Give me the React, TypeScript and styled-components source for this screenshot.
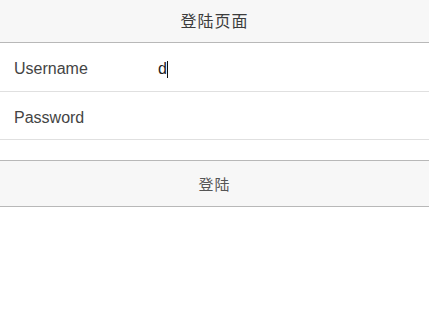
import React from "react";
import styled, { createGlobalStyle } from "styled-components";

const Global = createGlobalStyle`
  html, body { margin: 0; padding: 0; background: #fff; }
  body { font-family: "Liberation Sans", Arial, "Noto Sans CJK SC", sans-serif; color: #333; }
`;

const Page = styled.div`
  width: 429px;
  display: flex;
  flex-direction: column;
`;

const Header = styled.header`
  height: 43px;
  box-sizing: border-box;
  padding-bottom: 2px;
  background: #f7f7f7;
  border-bottom: 1px solid #b8b8b8;
  display: flex;
  align-items: center;
  justify-content: center;
  font-size: 16px;
  color: #3c3c3c;
  letter-spacing: 1px;
  font-family: "Noto Sans CJK SC", sans-serif;
`;

const Form = styled.div`
  display: flex;
  flex-direction: column;
`;

const Row = styled.label<{ $h: number }>`
  height: ${(p) => p.$h}px;
  box-sizing: border-box;
  padding-top: 4px;
  border-bottom: 1px solid #e0e0e0;
  display: flex;
  align-items: center;
  padding-left: 14px;
  font-size: 16px;
`;

const Label = styled.span`
  width: 144px;
  color: #444;
`;

const Value = styled.span`
  display: flex;
  align-items: center;
  color: #222;
  font-size: 16px;
`;

const Caret = styled.span`
  display: inline-block;
  width: 1px;
  height: 17px;
  background: #111;
`;

const Button = styled.button`
  margin-top: 20px;
  height: 47px;
  width: 100%;
  background: #f7f7f7;
  border: none;
  border-top: 1px solid #b8b8b8;
  border-bottom: 1px solid #b8b8b8;
  font-size: 15px;
  color: #555;
  letter-spacing: 1px;
  font-family: "Noto Sans CJK SC", sans-serif;
  padding: 0 0 1px 0;
`;

export default function App() {
  return (
    <Page>
      <Global />
      <Header>登陆页面</Header>
      <Form>
        <Row $h={49}>
          <Label>Username</Label>
          <Value>
            d<Caret />
          </Value>
        </Row>
        <Row $h={48}>
          <Label>Password</Label>
        </Row>
      </Form>
      <Button>登陆</Button>
    </Page>
  );
}
